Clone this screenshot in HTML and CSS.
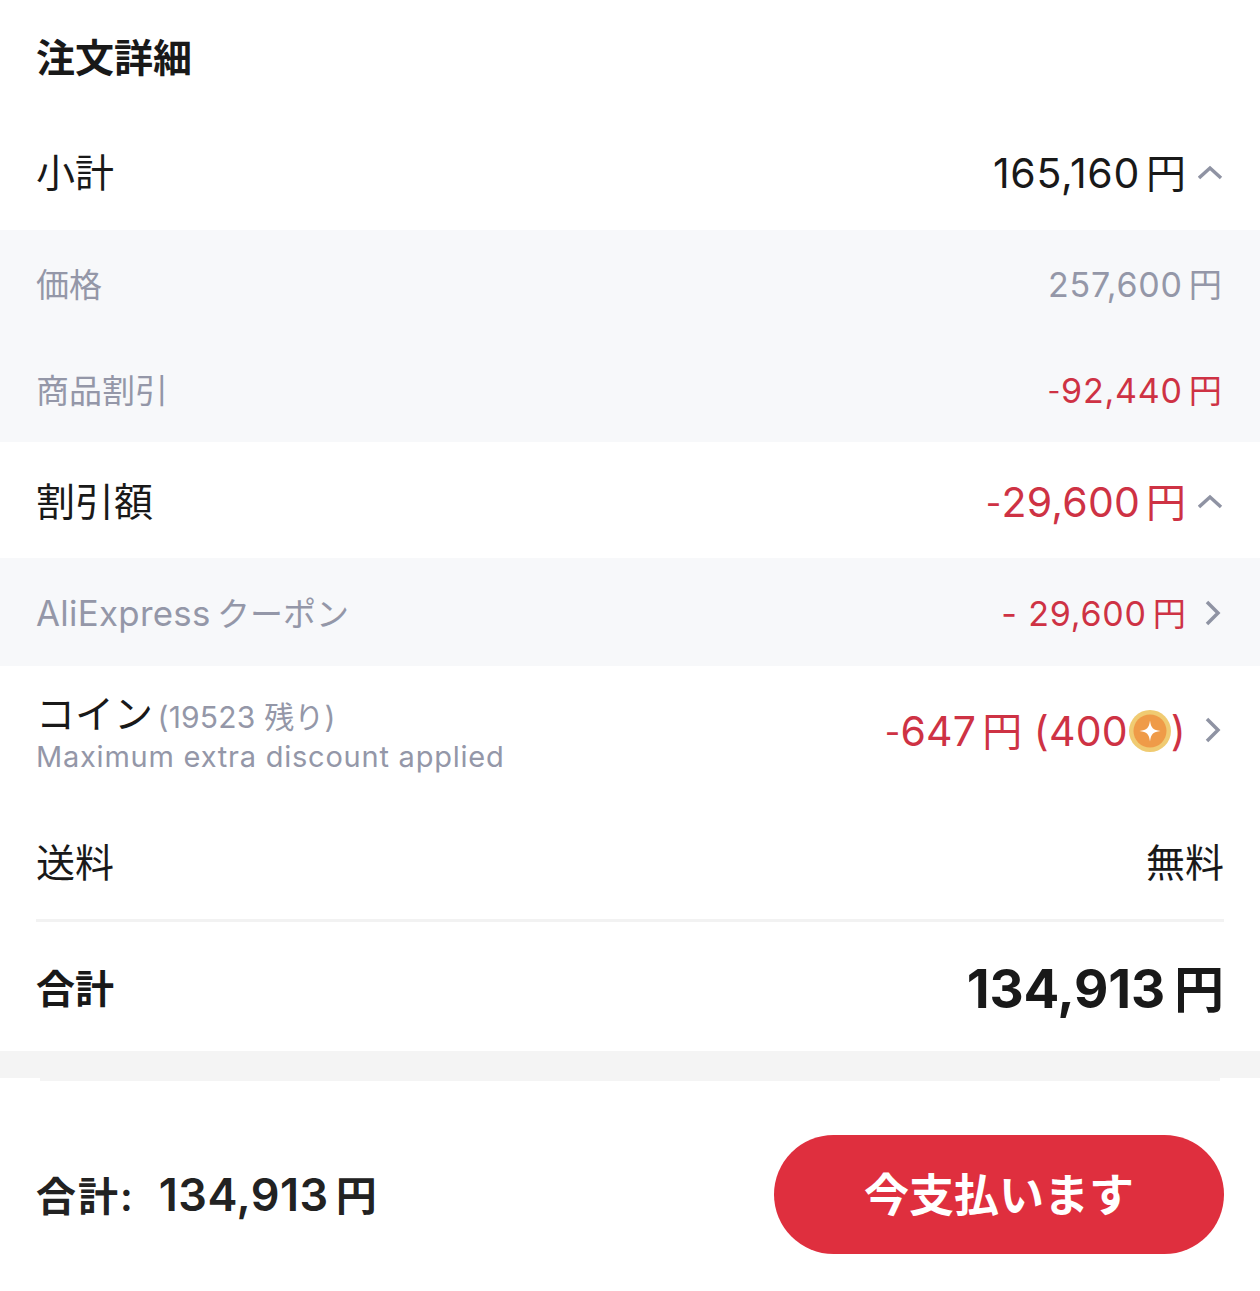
FILE: index.html
```html
<!DOCTYPE html>
<html lang="ja">
<head>
<meta charset="utf-8">
<title>注文詳細</title>
<link rel="stylesheet" href="styles.css">
</head>
<body>
<main class="page">
  <h1 class="title">注文詳細</h1>

  <div class="row row-subtotal">
    <span class="label">小計</span>
    <span class="value"><span>165,160<span class="yen">円</span></span><svg class="chev" viewBox="0 0 26 26"><path d="M1 18 L12 8 L23 18"/></svg></span>
  </div>

  <div class="sub sub-price">
    <div class="subrow"><span>価格</span><span class="num"><span>257,600<span class="yen">円</span></span></span></div>
    <div class="subrow"><span>商品割引</span><span class="num red"><span><span class="minus">-</span>92,440<span class="yen">円</span></span></span></div>
  </div>

  <div class="row row-discount">
    <span class="label">割引額</span>
    <span class="value red"><span><span class="minus">-</span>29,600<span class="yen">円</span></span><svg class="chev" viewBox="0 0 26 26"><path d="M1 18 L12 8 L23 18"/></svg></span>
  </div>

  <div class="sub sub-coupon">
    <div class="subrow"><span><span class="latin">AliExpress</span> クーポン</span><span class="num red"><span>- 29,600<span class="yen">円</span></span><svg class="chev chev-right" viewBox="0 0 26 26"><path d="M8 2 L19 13 L8 24"/></svg></span></div>
  </div>

  <div class="row row-coin">
    <div class="coin-left">
      <div><span class="label">コイン</span> <span class="coin-rest">(19523 残り)</span></div>
      <div class="coin-note">Maximum extra discount applied</div>
    </div>
    <span class="value red"><span><span class="minus">-</span>647<span class="yen">円</span> (400</span><svg class="coin" viewBox="0 0 42 42"><circle cx="21" cy="21" r="21" fill="#f0cb72"/><circle cx="21" cy="21" r="16.500" fill="#ef9b48"/><path d="M21 10.500 C22 18 24 20 31.500 21 C24 22 22 24 21 31.500 C20 24 18 22 10.500 21 C18 20 20 18 21 10.500Z" fill="#fff"/></svg><span>)</span><svg class="chev chev-right" viewBox="0 0 26 26"><path d="M8 2 L19 13 L8 24"/></svg></span>
  </div>

  <div class="row row-ship">
    <span class="label">送料</span>
    <span class="label">無料</span>
  </div>

  <div class="row row-total">
    <span class="label strong">合計</span>
    <span class="total">134,913<span class="yen">円</span></span>
  </div>

  <div class="band"><div class="band-lip"></div></div>

  <footer class="footer">
    <span class="footer-total"><span class="footer-label">合計:</span>134,913<span class="yen">円</span></span>
    <button class="pay">今支払います</button>
  </footer>
</main>
</body>
</html>
```
FILE: styles.css
```css
* { box-sizing: border-box; }
html, body { margin: 0; padding: 0; background: #fff; }
body { font-family: Inter, "Noto Sans CJK JP", sans-serif; color: #191919; }
.page { width: 1260px; height: 1291px; overflow: hidden; }
.title { margin: 0; padding: 35px 36px 0; height: 116px; font-size: 39px; line-height: 46px; font-weight: 700; }
.row { display: flex; justify-content: space-between; align-items: center; padding: 0 36px; }
.row-subtotal { height: 114px; }
.row-discount { height: 116px; padding-top: 4px; }
.row-coin { height: 130px; }
.row-ship { height: 126px; margin: 0 36px; padding: 10px 0 0; border-bottom: 3px solid #f2f2f2; }
.row-total { height: 128px; padding-top: 6px; }
.label { font-size: 39px; line-height: 46px; }
.strong { font-weight: 700; }
.value { display: flex; align-items: center; font-size: 41px; line-height: 46px; letter-spacing: 0.700px; }
.value.red { letter-spacing: 0.200px; }
.yen { font-size: 0.975em; margin-left: 6px; letter-spacing: 0; }
.minus { font-size: 0.820em; vertical-align: 2px; }
.red { color: #ce3244; }
.chev { width: 26px; height: 26px; margin-left: 12px; fill: none; stroke: #8f93a3; stroke-width: 3.500; flex: none; }
.chev-right { margin-left: 13px; margin-right: -1px; position: relative; top: 1px; }
.row-coin .chev-right { top: -1px; }
.sub { background: #f7f8fa; color: #9497a8; font-size: 33px; padding: 0 36px; }
.sub-price { height: 212px; display: flex; flex-direction: column; }
.sub-price .subrow { height: 106px; }
.sub-price .subrow + .subrow { height: 108px; }
.sub-price .yen { margin-right: 2px; }
.sub-coupon { height: 108px; }
.sub-coupon .subrow { height: 108px; }
.subrow { display: flex; justify-content: space-between; align-items: center; }
.latin { font-size: 34.800px; letter-spacing: 0.300px; margin-right: -3px; }
.num { display: flex; align-items: center; font-size: 34px; letter-spacing: 0.800px; }
.coin-left { display: flex; flex-direction: column; padding-top: 3px; }
.coin-rest { font-size: 30px; color: #9497a8; letter-spacing: 0.200px; }
.coin-note { font-size: 29px; line-height: 36px; color: #9497a8; letter-spacing: 0.770px; margin-top: 2px; }
.coin { width: 42px; height: 42px; margin: 0 0 0 1px; flex: none; }
.total { font-size: 53px; line-height: 60px; font-weight: 700; letter-spacing: -0.200px; }
.total .yen { font-size: 50px; margin-left: 9px; }
.band { height: 27px; background: #f4f4f4; position: relative; margin-top: 1px; }
.band-lip { position: absolute; left: 40px; right: 40px; top: 27px; height: 3px; background: #f4f4f4; }
.footer { display: flex; justify-content: space-between; align-items: center; padding: 57px 36px 0; }
.footer-total { font-size: 45px; line-height: 52px; font-weight: 600; color: #222; letter-spacing: 0.500px; padding-top: 2px; }
.footer-total .yen { font-size: 41px; margin-left: 7px; }
.footer-label { font-size: 40px; letter-spacing: 2px; margin-right: 24px; }
.pay { width: 450px; height: 119px; border: 0; border-radius: 60px; background: #df2f3e; color: #fff; font: 600 45px Inter, "Noto Sans CJK JP", sans-serif; padding: 0 0 4px; }
```
